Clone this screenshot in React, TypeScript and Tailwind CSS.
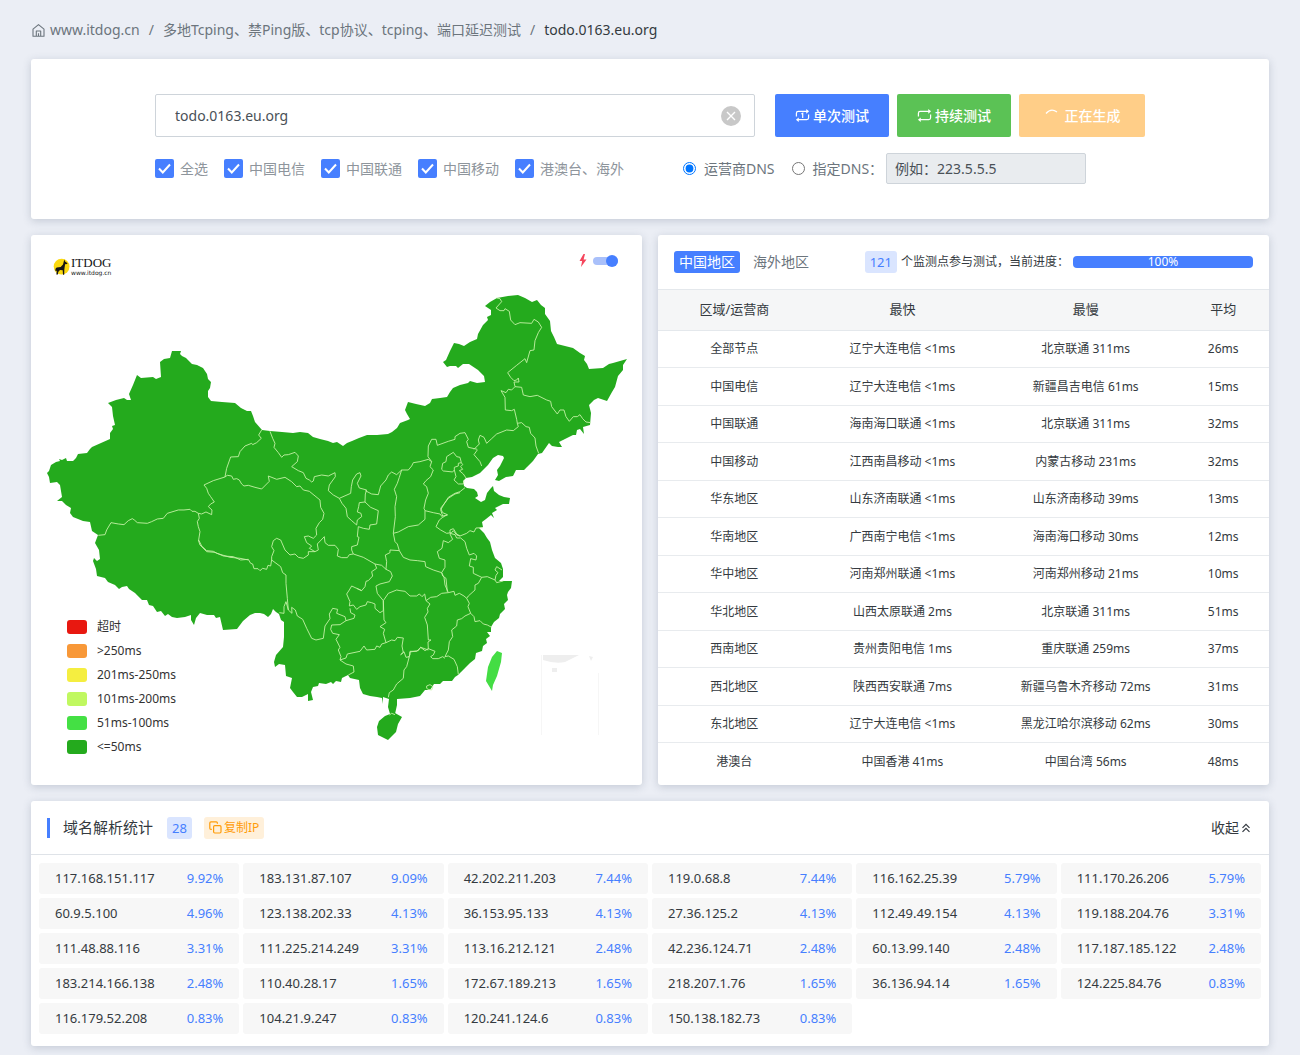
import type { ReactNode } from 'react';

const CARRIERS = ['全选', '中国电信', '中国联通', '中国移动', '港澳台、海外'];

const LEGEND = [
  { label: '超时', color: 'bg-[#e81810]' },
  { label: '>250ms', color: 'bg-[#f89838]' },
  { label: '201ms-250ms', color: 'bg-[#f5ee40]' },
  { label: '101ms-200ms', color: 'bg-[#c0f860]' },
  { label: '51ms-100ms', color: 'bg-[#44e044]' },
  { label: '<=50ms', color: 'bg-[#24aa1d]' },
];

const REGIONS = [
  ['全部节点', '辽宁大连电信 <1ms', '北京联通 311ms', '26ms'],
  ['中国电信', '辽宁大连电信 <1ms', '新疆昌吉电信 61ms', '15ms'],
  ['中国联通', '海南海口联通 <1ms', '北京联通 311ms', '32ms'],
  ['中国移动', '江西南昌移动 <1ms', '内蒙古移动 231ms', '32ms'],
  ['华东地区', '山东济南联通 <1ms', '山东济南移动 39ms', '13ms'],
  ['华南地区', '广西南宁电信 <1ms', '海南海口移动 30ms', '12ms'],
  ['华中地区', '河南郑州联通 <1ms', '河南郑州移动 21ms', '10ms'],
  ['华北地区', '山西太原联通 2ms', '北京联通 311ms', '51ms'],
  ['西南地区', '贵州贵阳电信 1ms', '重庆联通 259ms', '37ms'],
  ['西北地区', '陕西西安联通 7ms', '新疆乌鲁木齐移动 72ms', '31ms'],
  ['东北地区', '辽宁大连电信 <1ms', '黑龙江哈尔滨移动 62ms', '30ms'],
  ['港澳台', '中国香港 41ms', '中国台湾 56ms', '48ms'],
];

const IPS = [
  ['117.168.151.117', '9.92%'], ['183.131.87.107', '9.09%'], ['42.202.211.203', '7.44%'],
  ['119.0.68.8', '7.44%'], ['116.162.25.39', '5.79%'], ['111.170.26.206', '5.79%'],
  ['60.9.5.100', '4.96%'], ['123.138.202.33', '4.13%'], ['36.153.95.133', '4.13%'],
  ['27.36.125.2', '4.13%'], ['112.49.49.154', '4.13%'], ['119.188.204.76', '3.31%'],
  ['111.48.88.116', '3.31%'], ['111.225.214.249', '3.31%'], ['113.16.212.121', '2.48%'],
  ['42.236.124.71', '2.48%'], ['60.13.99.140', '2.48%'], ['117.187.185.122', '2.48%'],
  ['183.214.166.138', '2.48%'], ['110.40.28.17', '1.65%'], ['172.67.189.213', '1.65%'],
  ['218.207.1.76', '1.65%'], ['36.136.94.14', '1.65%'], ['124.225.84.76', '0.83%'],
  ['116.179.52.208', '0.83%'], ['104.21.9.247', '0.83%'], ['120.241.124.6', '0.83%'],
  ['150.138.182.73', '0.83%'],
];

// Outer coastline and land border, clockwise from the far west.
const MAINLAND = [
  '47,473 49,471 51,465 56,462 60,461 59,459 62,460 66,458 67,461 73,461 76,458 78,454 87,453 90,449 92,447 101,443 110,439 110,433 113,429 112,426 115,425 113,416 112,407 108,403 116,400 124,398 127,400 131,400 129,394 133,385 137,375 141,378 153,377 156,379 161,377 160,362 164,359 170,358 172,351 181,351 180,354 182,356 186,358 192,364 197,365 203,368 207,374 208,379 211,382 210,388 208,391 208,397 211,401 222,402 235,403 241,408 247,411 251,411 253,416 255,422 262,430',
  '270,431 282,432 293,433 300,432 308,433 313,437 320,439 328,441 333,443 337,442 343,446 347,443 352,441 359,438 367,435 377,435 388,434 392,432 397,428 400,423 408,420 410,419 407,414 405,410 408,402 416,404 425,406 430,403 432,399 440,398 447,397 450,392 453,388 460,385 468,383 470,381 477,383 485,382 484,376 478,370 472,366 469,364 463,364 458,368 456,366 450,366 447,367 443,362 446,360 450,351 454,343 459,344 464,346 470,342 477,339 478,334 483,325 488,320 487,317 491,315 491,310 485,306 490,302 497,298 508,296 518,295 525,298 532,302 537,300 541,305 545,308 545,314 550,321 551,331 554,337 557,344 565,346 573,348 580,353 585,356 584,360 587,364 589,369 603,368 609,364 613,363 627,359 623,365 623,370 618,376 615,387 612,392 607,401 598,398 594,400 589,405 591,413 590,425 583,427 584,434 580,429 577,430 576,435 573,435 565,439 559,442 562,447 558,447 552,446 549,443 542,453 538,454 533,461 527,467 524,470 516,470 513,476 506,477 499,481 495,480 498,475 497,470 500,466 504,458 503,456 498,455 493,458 488,465 480,473 472,477 466,478 463,481',
  '464,486 467,488 474,489 477,492 478,496 475,498 481,502 485,500 487,493 491,488 493,486 494,491 499,495 504,497 510,498 509,504 503,504 499,506 495,508 497,510 492,513 494,518 491,515 486,519 482,522 483,527 479,528 484,533 487,538 490,542 492,550 495,558 501,563 503,569 503,577 499,581 505,581 512,581 511,588 508,592 507,595 508,600 504,604 505,609 500,614 499,618 494,622 491,627 491,632 487,632 490,636 486,639 487,643 483,646 482,651 476,653 475,659 470,663 466,667 461,672 458,675 455,677 452,681 443,681 440,684 434,684 430,690 425,690 420,696 410,698 397,699 397,705 395,714 390,714 388,707 389,699 383,697 383,704 382,698 377,697 370,696 363,694 360,688 359,680 350,678 348,675 342,678 341,682 336,681 333,684 331,682 326,684 319,683 318,686 313,687 311,692 313,700 308,701 308,694 302,697 297,697 293,692 290,688 292,678 286,676 285,665 279,664 275,667 274,662 276,655 283,647 284,637 284,622 281,620 279,614 276,612 273,609 271,614 268,617 264,614 260,613 255,613 250,615 243,621 237,629 223,630 220,617 216,618 214,615 207,615 200,613 196,618 194,625 191,620 191,615 185,617 177,618 172,617 168,614 165,616 161,611 157,612 153,606 149,605 147,600 142,600 135,593 129,589 127,586 122,587 119,589 115,585 108,582 105,578 97,576 96,569 93,561 94,558 97,561 100,559 99,550 95,543 98,535 92,531 90,522 83,521 73,517 70,513 71,508 66,505 62,501 57,501 62,497 60,485 57,482 50,483 49,477',
].join(' ');

const HAINAN = '379,721 385,716 390,714 395,713 402,717 398,724 396,732 388,740 378,735 377,727';
const TAIWAN = '497,651 502,653 501,662 497,676 493,685 492,691 486,681 488,667 492,657';

// Province borders, grouped by the corner of the map they are measured from.
const BORDERS = [
  {
    at: 'translate(40 340) scale(.3333)',
    lines: [
      '175,586 195,584 200,570 213,548 235,552 252,554 265,542 277,536 283,540 292,548 322,550 335,545 352,537 370,535 382,520 415,510 432,510 450,508 456,514 465,514 475,520',
      '475,520 485,522 498,516 515,524 516,510 505,500 512,492 523,486 512,470 505,460 500,445 492,435 520,422 555,411',
      '555,411 560,385 572,351 595,350 600,335 615,318 635,310 638,314 650,308 664,295 656,285 665,270',
      '555,411 562,406 575,408 580,418 590,416 598,420 605,432 612,438 625,436 645,442 665,447 680,432 688,424 685,408',
      '475,520 478,535 472,545 475,560 480,575 476,600 485,618 500,632 520,634 530,640 570,652 600,655 625,660',
    ],
  },
  {
    at: 'translate(260 420) scale(.3333)',
    lines: [
      '30,34 38,55 45,70 42,82 55,98 65,112 72,105 85,104 105,97 115,108 112,125 95,140 115,152 130,158 138,175 148,180 155,186 160,183 163,170 185,165 205,168 225,158 226,170 208,195 205,212 220,225 238,235',
      '25,168 50,178 75,172 95,185 110,200 120,198 130,210 148,214 180,240 182,262 192,280 188,298 178,308 168,325 170,345 160,355 145,348 133,350 140,368 155,378 148,385 165,395 145,395 145,405 130,415 115,412 105,402 90,405 75,390 62,360 50,355 40,362 35,380 42,392 35,410 35,420',
      '165,395 175,390 172,372 193,350 195,368 205,376 225,376 235,388 232,408 245,413 262,413 268,404 280,402',
      '238,235 246,250 258,265 262,290 275,302 290,315 292,300 305,290 303,280 292,276 296,260 298,248 315,246',
      '315,246 332,262 355,272 350,312 330,315 328,328 310,325 295,320 292,350 297,352 292,375 275,380 275,390 280,402',
      '238,235 272,220 274,200 278,180 290,162 300,158 303,168 292,190 298,204 320,210 316,222 315,246',
      '316,212 335,222 355,224 362,198 378,180 385,165 395,156 410,164 425,150 445,150 455,138 460,128 480,125 505,118',
      '425,150 418,172 412,190 403,208 410,230 405,260 406,290 400,340',
      '400,340 415,336 445,320 475,315 495,298 495,272',
      '505,118 515,125 510,140 520,150 512,170 498,182 490,192 500,200 505,220 497,240 492,265 495,272',
      '280,402 310,412 345,432 365,436 378,448 380,425 376,405 390,398 390,390 418,392 412,372 405,365 400,340',
      '418,392 430,412 450,420 472,422 495,425 497,440 520,450 545,458',
      '345,432 350,445 335,455 338,468 325,482 318,484 315,500 305,512 290,505',
      '378,448 392,455 397,468',
      '495,272 520,278 540,282 548,292 562,284 548,278 542,265 555,248 565,235 585,222 600,218',
      '548,292 538,300 528,320 542,330 560,340 575,338 580,332 590,345 600,348',
      '570,342 578,358 565,368 550,362 546,385 532,395 538,415 555,420 555,442 545,458',
      '545,458 548,468 558,475 562,515',
    ],
  },
  {
    at: 'translate(400 280) scale(.3333)',
    lines: [
      '290,54 300,56 305,65 288,84 300,92 312,92 315,86 328,94 332,120 345,134 360,128 395,130 402,118 415,126 425,142 415,158 405,182 402,210 390,212 380,248 375,236 350,256 323,278 332,292 342,302 350,300 355,294 357,306 342,306 345,320 365,322 370,345 390,350 412,346 440,360 452,364 455,380 472,402 480,390 492,390 498,410 508,424 520,410 532,410 540,404 548,416 558,426 572,428',
      '345,320 335,330 325,328 318,338 303,332 315,352 316,390 335,392 343,388 350,418 352,430',
      '352,430 365,428 378,440 388,442 392,460 405,474 408,498 416,520',
      '352,430 355,440 340,452 320,450 290,462 275,476 260,490 252,472 240,466 235,480 238,492 222,508',
      '232,510 222,524 240,545 245,558',
      '232,508 205,502 200,485 205,478 195,458 180,460 165,470 165,478 145,484 112,496 108,478 95,478 85,498 84,530 95,545',
      '125,568 128,550 138,545 140,530 160,517 170,530 180,532 184,548 175,550 175,558 163,562 163,570 158,576 130,573 125,568',
      '163,570 168,590 162,600 175,612 190,612 192,602',
      '184,548 188,554 182,560 188,568 178,572 190,582 198,594',
    ],
  },
  {
    at: 'translate(400 440) scale(.3333)',
    lines: [
      '195,143 180,155 165,160 145,172 130,196 122,210 128,228 143,225',
      '150,280 150,270 160,266 170,282 180,288 200,280 210,272 222,276 228,264 248,263',
      '150,280 165,284 170,294 182,294 195,305 200,325 208,345 222,340 230,348 228,360 212,356 208,378 220,382 220,400 245,412',
      '245,412 262,410 285,420 290,428 310,423',
      '285,420 288,406 294,398 285,390 290,380 306,390',
      '245,412 235,430 225,435 225,450 205,468 200,475',
      '145,458 162,454 165,466 178,460 192,468 200,475',
      '200,475 208,490 204,500 212,520',
      '212,520 222,530 225,545 240,542 250,552 262,555 275,562',
      '212,520 195,528 185,536 172,540 170,558 155,570 158,590 148,605 145,630 135,650',
      '135,650 145,648 162,658 172,680 175,703',
      '78,482 92,472 110,470 125,460 145,458',
      '125,398 132,412 135,435 145,458',
      '0,452 15,454 30,468 50,468 58,462 66,470 74,462 78,482',
      '78,482 90,492 82,505 84,516 74,532 82,555 85,600 93,600 84,606 85,628',
      '25,652 30,645 30,634 50,634 62,622 75,632 85,626 105,634 100,645 92,650 98,656 115,656 128,650 135,655',
      '80,745 80,738 90,734 99,740 95,750 84,748 80,745',
    ],
  },
  {
    at: 'translate(260 560) scale(.3333)',
    lines: [
      '35,0 62,20 68,38 78,45 78,70 82,115 85,150 96,160 95,142 106,150 112,168 128,178 140,205 155,235 168,240 190,235 195,198 210,176 208,162 218,145 233,148 230,160 255,170 258,182 282,175 285,165 272,158 270,145',
      '85,150 78,125 72,140 72,160 58,158',
      '305,92 290,85 275,78 268,90 260,102 270,125 268,138 280,135 290,148 300,140 318,135 322,125 335,128 345,132 345,145 360,158 370,152 370,122 352,100 348,78 360,72 388,65 397,48',
      '258,182 240,194 215,195 212,208 218,220 238,224 228,238 240,262 235,270 243,290 240,300',
      '240,300 258,294 262,282 300,274 312,258 320,270 345,268 350,258 360,262 365,252 378,248',
      '370,122 372,180 378,188 360,200 374,208 370,220 378,248',
      '370,122 385,100 410,90 420,92',
      '378,248 395,240 405,242 412,232 430,234 426,258 430,278 422,284 432,275 438,292 448,290',
      '448,290 440,320 432,330 430,355 410,372 400,390 388,398 385,412',
      '448,290 450,276 475,272 482,262 505,270',
      '240,300 258,312 280,318 282,336 265,345',
      '388,465 395,460 405,464',
    ],
  },
  {
    at: 'translate(30 520) scale(.3333)',
    lines: ['505,60 510,75 530,95 555,97 580,108 610,110 632,120 655,118 662,130 668,132 672,146 684,146 690,152 698,145 710,148 714,136 722,138 725,120'],
  },
];

function ChinaMap() {
  return (
    <svg viewBox="31 235 611 550" className="block w-full" role="img" aria-label="中国地区">
      <g fill="#eeeeee">
        <path d="M543 655h36l-14 7q-10 2-22-2z" />
        <path d="M589 656l4 1-2 4zM552 668h5v4h-5z" />
        <path d="M541.5 655v80M598.5 673v62" stroke="#f6f6f6" fill="none" />
      </g>
      <polygon points={MAINLAND} fill="#24aa1d" />
      <polygon points={HAINAN} fill="#24aa1d" />
      <polygon points={TAIWAN} fill="#44dd44" />
      {BORDERS.map(group => (
        <g key={group.at} transform={group.at} fill="none" stroke="#c4f2a6" strokeWidth="2.7" strokeLinejoin="round">
          {group.lines.map(points => <polyline key={points} points={points} />)}
        </g>
      ))}
    </svg>
  );
}

function Logo() {
  return (
    <div className="flex items-center pt-[3px]">
      <svg width="18" height="18" viewBox="0 0 18 18" aria-hidden="true">
        <circle cx="8.600" cy="8.600" r="7.900" fill="#fbd90f" />
        <path d="M11.300 1.500l.8 2 2.400 1.700-.4.900-2 .2-.5 3.200-.3 2.500-.1 4.700h-1.200l-.3-4.500-2.700-.2-1.800 2-.3 2.600H3.300l.5-3.200-.9-1.100-1 1.300.9-3.300 1-.9 3.900-.3 2.300-2.600z" fill="#151515" />
      </svg>
      <div className="flex flex-col text-[#151515]">
        <span className="font-['Liberation_Serif',serif] text-[13px] leading-3">ITDOG</span>
        <span className="font-['DejaVu_Sans',sans-serif] text-[6px] leading-[7px]">www.itdog.cn</span>
      </div>
    </div>
  );
}

function RepeatIcon({ once = false }: { once?: boolean }) {
  return (
    <svg width="15" height="15" viewBox="0 0 16 16" fill="none" stroke="currentColor" strokeWidth="1.300" aria-hidden="true">
      <path d="M1.500 9V5.500q0-2 2-2H13M14.500 7v3.500q0 2-2 2H3" />
      <path d="M12 1l3 2.500-3 2.500zM4 10l-3 2.500 3 2.500z" fill="currentColor" stroke="none" />
      {once && <path d="M6.800 6.500l1.400-.8v5" />}
    </svg>
  );
}

function Card({ className = '', children }: { className?: string; children: ReactNode }) {
  return <section className={`rounded-[3px] bg-white shadow-[0_2px_8px_rgba(60,75,100,0.22)] ${className}`}>{children}</section>;
}

function Breadcrumb() {
  return (
    <nav className="flex items-center text-sm leading-5 text-[#6c757d]">
      <a href="#home" className="flex items-center gap-1">
        <svg width="15" height="15" viewBox="0 0 15 15" fill="none" stroke="currentColor" strokeWidth="1.100" strokeLinejoin="round" aria-hidden="true">
          <path d="M2 6.200L7.500 1.600 13 6.200v7H2zM5.300 13V8h4.400v5M7.500 10.300V13" />
        </svg>
        www.itdog.cn
      </a>
      <span className="px-[9px]">/</span>
      <a href="#tcping">多地Tcping、禁Ping版、tcp协议、tcping、端口延迟测试</a>
      <span className="px-[9px]">/</span>
      <span className="text-[#343a40]">todo.0163.eu.org</span>
    </nav>
  );
}

function TestForm() {
  return (
    <Card className="px-8 py-[35px]">
      <form className="mx-auto max-w-[990px]" onSubmit={e => e.preventDefault()}>
        <div className="flex items-center gap-2">
          <div className="relative mr-3 flex-1">
            <input
              aria-label="域名"
              defaultValue="todo.0163.eu.org"
              className="h-[43px] w-full rounded-[2px] border border-[#ced4da] px-[19px] text-sm text-[#495057] outline-none"
            />
            <button type="button" aria-label="清空" className="absolute top-3 right-3.5 flex size-5 items-center justify-center rounded-full bg-[#c8c8c8]">
              <svg width="10" height="10" viewBox="0 0 10 10" stroke="#fff" strokeWidth="1.400" aria-hidden="true"><path d="M1 1l8 8M9 1L1 9" /></svg>
            </button>
          </div>
          <button className="flex h-[43px] w-[114px] items-center justify-center gap-[3px] rounded-[2px] bg-[#467fff] text-sm font-medium text-white">
            <RepeatIcon once />单次测试
          </button>
          <button type="button" className="flex h-[43px] w-[114px] items-center justify-center gap-[3px] rounded-[2px] bg-[#5bc255] text-sm font-medium text-white">
            <RepeatIcon />持续测试
          </button>
          <button type="button" className="flex h-[43px] w-[126px] items-center justify-center gap-1.5 rounded-[2px] bg-[#ffce88] text-sm font-medium text-white">
            <svg width="15" height="16" viewBox="0 0 15 16" fill="none" stroke="currentColor" strokeWidth="1.200" aria-hidden="true"><path d="M2 5.500Q7-.5 13 4" /></svg>
            正在生成
          </button>
        </div>

        <div className="mt-4 flex items-center text-sm text-[#6c757d]">
          <div className="flex w-[528px] gap-4 text-[#8e959c]">
            {CARRIERS.map(name => (
              <label key={name} className="relative flex items-center gap-1.5">
                <input type="checkbox" defaultChecked className="size-[19px] appearance-none rounded-[2px] bg-[#467fff]" />
                <svg className="pointer-events-none absolute left-0" width="19" height="19" viewBox="0 0 19 19" fill="none" stroke="#fff" strokeWidth="2" aria-hidden="true">
                  <path d="M4 9.500l3.800 4L15 5.500" />
                </svg>
                {name}
              </label>
            ))}
          </div>
          <label className="flex items-center gap-2">
            <input type="radio" name="dns" defaultChecked className="size-[13px] accent-[#0075ff]" />
            运营商DNS
          </label>
          <label className="mr-[3px] ml-[17px] flex items-center gap-2">
            <input type="radio" name="dns" className="size-[13px]" />
            指定DNS：
          </label>
          <input
            aria-label="指定DNS"
            placeholder="例如：223.5.5.5"
            className="h-[31px] w-[200px] rounded-[2px] border border-[#ced4da] bg-[#e9ecef] px-2 text-sm placeholder:text-[#495057]"
          />
        </div>
      </form>
    </Card>
  );
}

function MapPanel() {
  return (
    <Card className="relative">
      <ChinaMap />
      <div className="absolute top-[19px] right-6 left-[22px] flex items-start justify-between">
        <Logo />
        <div className="flex items-center gap-1.5">
          <svg width="8" height="13" viewBox="0 0 8 13" fill="#f5455c" aria-hidden="true"><path d="M4.500 0L.5 7h2.600L2 13l5.500-7.500H4.600L6 0z" /></svg>
          <button role="switch" aria-checked="true" aria-label="极速" className="flex h-2 w-[25px] items-center justify-end rounded-full bg-[#a9c0fa]">
            <span className="size-3 rounded-full bg-[#467fff]" />
          </button>
        </div>
      </div>
      <ul className="absolute bottom-[26px] left-9 text-xs leading-6 text-[#333]">
        {LEGEND.map(item => (
          <li key={item.label} className="flex items-center gap-2.5">
            <span className={`h-3.5 w-5 rounded-[3px] ${item.color}`} />
            {item.label}
          </li>
        ))}
      </ul>
    </Card>
  );
}

function StatsPanel() {
  return (
    <Card className="overflow-hidden">
      <div className="flex h-[54px] items-center justify-between px-4">
        <div className="flex gap-2 text-sm">
          <button className="h-[22px] rounded-[3px] bg-[#467fff] px-[5px] leading-5 text-white">中国地区</button>
          <button className="h-[22px] px-[5px] leading-5 text-[#6c757d]">海外地区</button>
        </div>
        <div className="flex items-center gap-1 text-xs text-[#343a40]">
          <span className="rounded-[3px] bg-[#dae5ff] px-[5px] py-px text-[13px] leading-5 text-[#467fff]">121</span>
          个监测点参与测试，当前进度：
          <div role="progressbar" aria-valuenow={100} className="h-3 w-[180px] rounded-[4px] bg-[#467fff] text-center leading-3 text-white">100%</div>
        </div>
      </div>
      <table className="w-full table-fixed text-center text-[#343a40]">
        <thead className="text-[13px]">
          <tr className="h-[41px] border-y border-[#e4e8ec] bg-[#f5f6f7]">
            <th className="w-[25%] font-normal">区域/运营商</th>
            <th className="w-[30%] font-normal">最快</th>
            <th className="w-[30%] font-normal">最慢</th>
            <th className="w-[15%] font-normal">平均</th>
          </tr>
        </thead>
        <tbody className="text-xs">
          {REGIONS.map(row => (
            <tr key={row[0]} className="border-b border-[#e8ebee] odd:h-[37px] even:h-[38px] last:border-0">
              {row.map((cell, i) => <td key={i}>{cell}</td>)}
            </tr>
          ))}
        </tbody>
      </table>
    </Card>
  );
}

function DnsPanel() {
  return (
    <Card>
      <header className="flex h-[54px] items-center border-b border-[#dfe3e8] px-4 text-[#343a40]">
        <h2 className="flex items-center gap-[13px] text-[15px]">
          <span className="h-5 w-[3px] bg-[#467fff]" />
          域名解析统计
        </h2>
        <span className="ml-3.5 rounded-[3px] bg-[#dae5ff] px-[5px] py-px text-[13px] leading-5 text-[#467fff]">28</span>
        <button className="ml-3 flex items-center gap-0.5 rounded-[3px] bg-[#fff0da] px-[5px] py-px text-xs leading-5 text-[#ff9c09]">
          <svg width="13" height="13" viewBox="0 0 13 13" fill="none" stroke="currentColor" strokeWidth="1.200" aria-hidden="true">
            <rect x="4.600" y="4.600" width="7.400" height="7.400" rx="1.200" />
            <path d="M2.800 8.400H2q-1.200 0-1.200-1.200V2Q.8.800 2 .8h5.200q1.200 0 1.200 1.200v.8" />
          </svg>
          复制IP
        </button>
        <button className="ml-auto flex items-center gap-0.5 pr-0.5 text-sm">
          收起
          <svg width="10" height="10" viewBox="0 0 10 10" fill="none" stroke="currentColor" strokeWidth="1.200" aria-hidden="true"><path d="M1.500 4.800L5 1.300l3.500 3.500M1.500 8.800L5 5.300l3.500 3.500" /></svg>
        </button>
      </header>
      <ul className="grid grid-cols-6 gap-1 px-2 pt-2 pb-3 text-[13px]">
        {IPS.map(([ip, share]) => (
          <li key={ip} className="flex h-[31px] items-center justify-between rounded-[3px] bg-[#f7f7f7] px-4 text-[#343a40]">
            {ip}
            <span className="text-[#467fff]">{share}</span>
          </li>
        ))}
      </ul>
    </Card>
  );
}

export default function App() {
  return (
    <main className="min-h-screen bg-[#ebeef5] px-[31px] pt-5 pb-2 font-['Noto_Sans','Noto_Sans_CJK_SC',sans-serif]">
      <Breadcrumb />
      <div className="mt-[19px] flex flex-col gap-4">
        <TestForm />
        <div className="grid grid-cols-2 gap-4">
          <MapPanel />
          <StatsPanel />
        </div>
        <DnsPanel />
      </div>
    </main>
  );
}
